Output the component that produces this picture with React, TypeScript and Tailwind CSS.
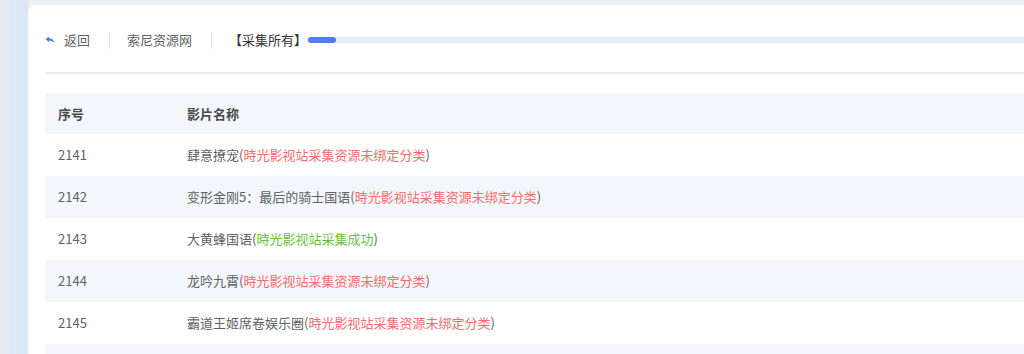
import React from "react";

const rows = [
  { id: "2141", name: "肆意撩宠", msg: "時光影视站采集资源未绑定分类", ok: false },
  { id: "2142", name: "变形金刚5：最后的骑士国语", msg: "時光影视站采集资源未绑定分类", ok: false },
  { id: "2143", name: "大黄蜂国语", msg: "時光影视站采集成功", ok: true },
  { id: "2144", name: "龙吟九霄", msg: "時光影视站采集资源未绑定分类", ok: false },
  { id: "2145", name: "霸道王姬席卷娱乐圈", msg: "時光影视站采集资源未绑定分类", ok: false },
  { id: "2146", name: "", msg: "", ok: false },
];

export default function App() {
  return (
    <div
      className="w-[1024px] h-[354px] overflow-hidden flex bg-[#edf0f6]"
      style={{ fontFamily: '"Noto Sans CJK SC", "Noto Sans", sans-serif' }}
    >
      <div className="w-[9px] h-full bg-[#e5ecf6]" />
      <div className="w-[19px] h-full bg-[#dfe8f6]" />
      <div className="flex-1 pt-[5px] min-w-0">
        <div className="bg-white rounded-tl-[8px] h-full pl-[17px] pt-[23px]">
          <div className="flex items-center h-[24px] text-[13px] text-[#606266]">
            <svg width="10" height="8" viewBox="0 0 10 8" className="mr-[9px]">
              <path d="M0.5 3.2 L4 0.5 L4 2.2 C7 2.2 9 3.8 9.5 7 C8.3 5.2 6.5 4.4 4 4.4 L4 6 Z" fill="#4a7cf0" />
            </svg>
            <span>返回</span>
            <div className="w-px h-[17px] bg-[#e4e6eb] ml-[19px] mr-[17px]" />
            <span>索尼资源网</span>
            <div className="w-px h-[17px] bg-[#e4e6eb] ml-[19px] mr-[17px]" />
            <span className="text-[#303133]">【采集所有】</span>
            <div className="flex-1 h-[6px] ml-[1px] rounded-l-full bg-[#e9edf4]">
              <div className="w-[28px] h-full rounded-full bg-[#4c7ef5]" />
            </div>
          </div>
          <div className="h-[2px] mt-[20px] bg-[#ececec]" />
          <div className="mt-[19px] text-[13px]">
            <div className="flex items-center h-[41px] bg-[#f3f6fa] pl-[13px] font-semibold text-[#4a4a4a]">
              <span className="w-[129px]">序号</span>
              <span>影片名称</span>
            </div>
            {rows.map((r, i) => (
              <div
                key={r.id}
                className={`flex items-center h-[42px] pl-[13px] text-[#606266] ${i % 2 === 1 ? "bg-[#f3f6fa]" : "bg-white"}`}
              >
                <span className="w-[129px]">{r.name ? r.id : ""}</span>
                {r.name && (
                  <span>
                    {r.name}(
                    <span className={r.ok ? "text-[#67c23a]" : "text-[#f56c6c]"}>{r.msg}</span>)
                  </span>
                )}
              </div>
            ))}
          </div>
        </div>
      </div>
    </div>
  );
}
